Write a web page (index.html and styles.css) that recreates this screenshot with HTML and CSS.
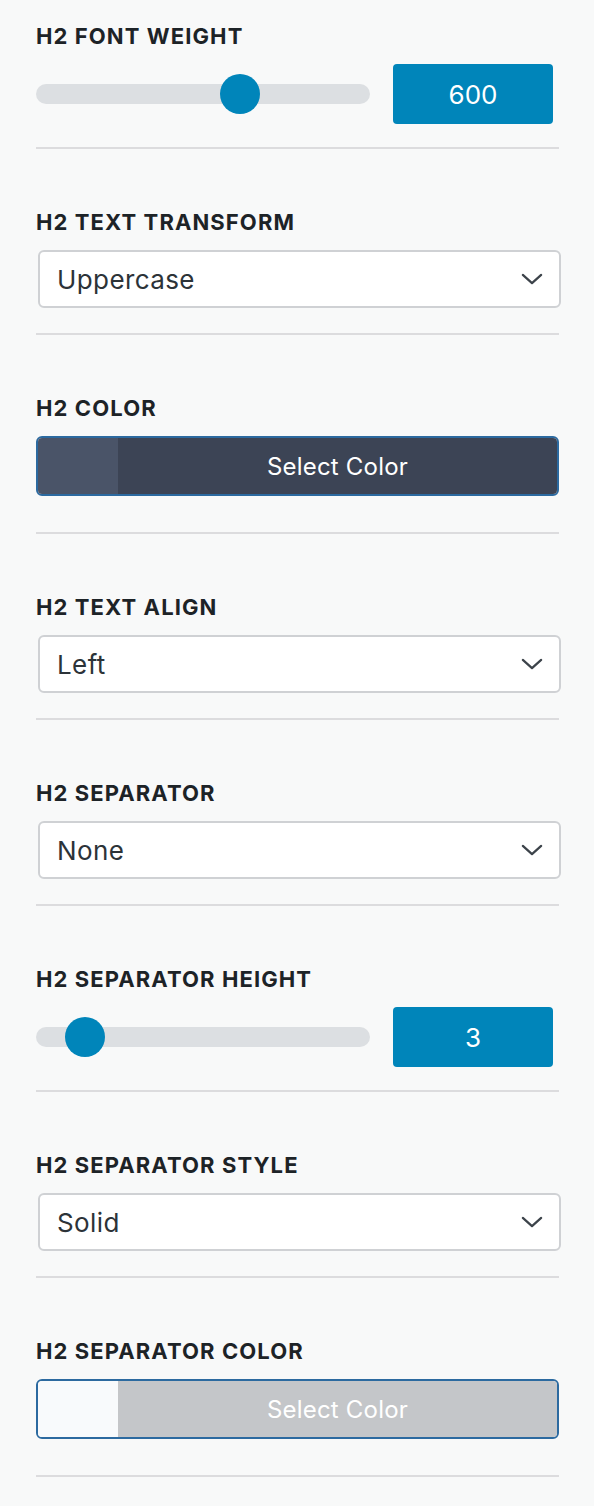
FILE: index.html
```html
<!DOCTYPE html>
<html>
<head>
<meta charset="utf-8">
<link rel="stylesheet" href="styles.css">
</head>
<body>
<div class="panel">
  <div class="field first">
    <div class="label">H2 Font Weight</div>
    <div class="slider-row">
      <div class="track"><span class="thumb" style="left: 204px"></span></div>
      <div class="value">600</div>
    </div>
  </div>
  <div class="field">
    <div class="label">H2 Text Transform</div>
    <div class="select"><span>Uppercase</span><svg class="chev" viewBox="0 0 24 14" width="22" height="13"><path d="M2 2 L12 11 L22 2" fill="none" stroke="#3c434a" stroke-width="2.4" stroke-linecap="round" stroke-linejoin="round"/></svg></div>
  </div>
  <div class="field color-field">
    <div class="label">H2 Color</div>
    <div class="color-btn dark"><span class="swatch"></span><span class="cb-text">Select Color</span></div>
  </div>
  <div class="field">
    <div class="label">H2 Text Align</div>
    <div class="select"><span>Left</span><svg class="chev" viewBox="0 0 24 14" width="22" height="13"><path d="M2 2 L12 11 L22 2" fill="none" stroke="#3c434a" stroke-width="2.4" stroke-linecap="round" stroke-linejoin="round"/></svg></div>
  </div>
  <div class="field">
    <div class="label">H2 Separator</div>
    <div class="select"><span>None</span><svg class="chev" viewBox="0 0 24 14" width="22" height="13"><path d="M2 2 L12 11 L22 2" fill="none" stroke="#3c434a" stroke-width="2.4" stroke-linecap="round" stroke-linejoin="round"/></svg></div>
  </div>
  <div class="field">
    <div class="label">H2 Separator Height</div>
    <div class="slider-row">
      <div class="track"><span class="thumb" style="left: 49px"></span></div>
      <div class="value">3</div>
    </div>
  </div>
  <div class="field">
    <div class="label">H2 Separator Style</div>
    <div class="select"><span>Solid</span><svg class="chev" viewBox="0 0 24 14" width="22" height="13"><path d="M2 2 L12 11 L22 2" fill="none" stroke="#3c434a" stroke-width="2.4" stroke-linecap="round" stroke-linejoin="round"/></svg></div>
  </div>
  <div class="field color-field">
    <div class="label">H2 Separator Color</div>
    <div class="color-btn light"><span class="swatch"></span><span class="cb-text">Select Color</span></div>
  </div>
</div>
</body>
</html>
```

FILE: styles.css
```css
html, body {
  margin: 0;
  padding: 0;
  background: #f8f9f9;
}
body {
  font-family: Inter, "Noto Sans", "Liberation Sans", sans-serif;
  color: #1d2327;
}
.panel {
  padding: 0 35px 0 36px;
}
.field {
  padding-top: 61px;
  padding-bottom: 23px;
  border-bottom: 2px solid #dcdcde;
}
.field.first {
  padding-top: 24px;
}
.label {
  font-size: 22px;
  line-height: 24px;
  font-weight: 700;
  text-transform: uppercase;
  letter-spacing: 1.1px;
  color: #1d2327;
  margin-bottom: 16px;
}
.slider-row {
  display: flex;
  align-items: center;
  height: 60px;
}
.track {
  position: relative;
  width: 334px;
  height: 20px;
  border-radius: 10px;
  background: #dcdfe2;
}
.thumb {
  position: absolute;
  top: 50%;
  width: 40px;
  height: 40px;
  margin-top: -20px;
  margin-left: -20px;
  border-radius: 50%;
  background: #0085ba;
}
.value {
  margin-left: 23px;
  width: 160px;
  height: 60px;
  border-radius: 4px;
  background: #0085ba;
  color: #fff;
  font-size: 26px;
  display: flex;
  align-items: center;
  justify-content: center;
}
.select {
  margin: 0 -2px 2px 2px;
  height: 58px;
  box-sizing: border-box;
  border: 2px solid #cfd1d4;
  border-radius: 6px;
  background: #fff;
  display: flex;
  align-items: center;
  justify-content: space-between;
  padding: 0 16px 0 17px;
  font-size: 26px;
  letter-spacing: 0.4px;
  color: #2c3338;
}
.chev {
  display: block;
}
.color-field {
  padding-bottom: 36px;
}
.color-btn {
  display: flex;
  height: 60px;
  box-sizing: border-box;
  border: 2px solid #2c6aa0;
  border-radius: 6px;
  overflow: hidden;
}
.swatch {
  width: 80px;
  flex: none;
}
.cb-text {
  flex: 1;
  display: flex;
  align-items: center;
  justify-content: center;
  color: #fff;
  font-size: 24px;
  letter-spacing: 0.2px;
}
.dark .swatch { background: #4a5468; }
.dark .cb-text { background: #3c4455; }
.light .swatch { background: #f8fafc; }
.light .cb-text { background: #c4c6c9; }
```
